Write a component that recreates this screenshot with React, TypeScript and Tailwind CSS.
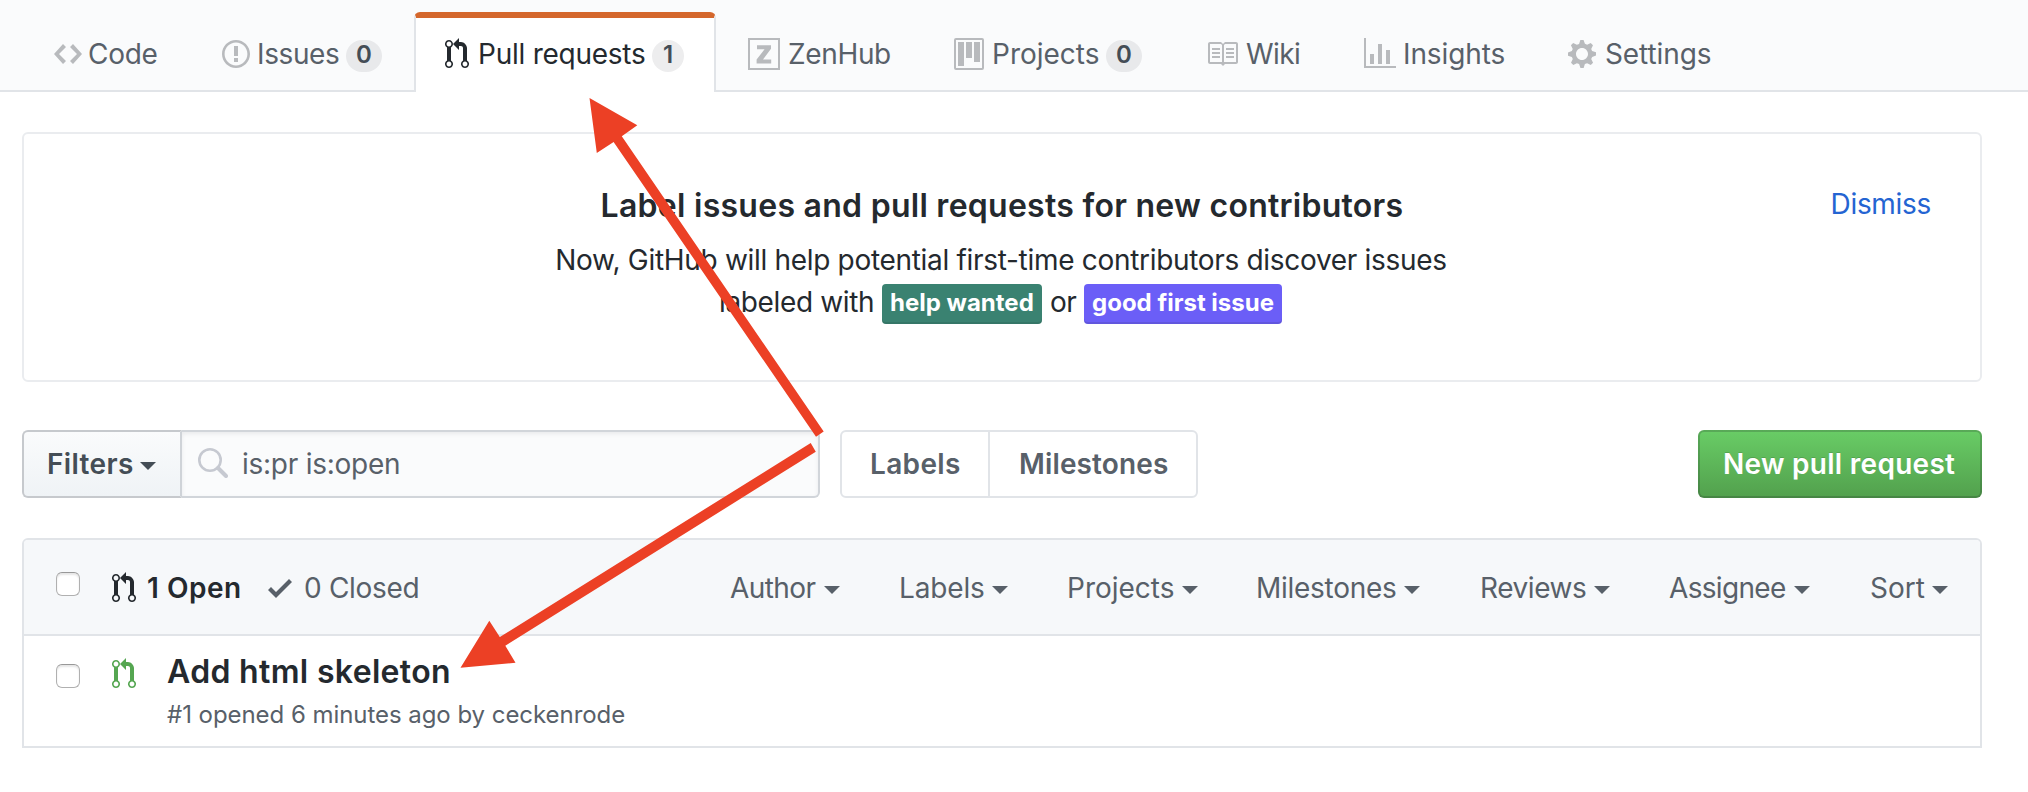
import type { ReactNode } from "react";
import clsx from "clsx";

const ICONS = {
  code: { w: 14, d: "M9.5 3L8 4.5 11.5 8 8 11.5 9.5 13 14 8 9.5 3zm-5 0L0 8l4.5 5L6 11.5 2.5 8 6 4.5 4.5 3z" },
  issue: { w: 14, d: "M7 2.3c3.14 0 5.7 2.56 5.7 5.7s-2.56 5.7-5.7 5.7A5.71 5.71 0 0 1 1.3 8c0-3.14 2.56-5.7 5.7-5.7zM7 1C3.14 1 0 4.14 0 8s3.14 7 7 7 7-3.14 7-7-3.14-7-7-7zm1 3H6v5h2V4zm0 6H6v2h2v-2z" },
  pull: { w: 12, d: "M11 11.28V5c-.03-.78-.34-1.47-.94-2.06C9.46 2.35 8.78 2.03 8 2H7V0L4 3l3 3V4h1c.27.02.48.11.69.31.21.2.3.42.31.69v6.28A1.993 1.993 0 0 0 10 15a1.993 1.993 0 0 0 1-3.72zm-1 2.92c-.66 0-1.2-.55-1.2-1.2 0-.65.55-1.2 1.2-1.2.65 0 1.2.55 1.2 1.2 0 .65-.55 1.2-1.2 1.2zM4 3c0-1.11-.89-2-2-2a1.993 1.993 0 0 0-1 3.72v6.56A1.993 1.993 0 0 0 2 15a1.993 1.993 0 0 0 1-3.72V4.72c.59-.34 1-.98 1-1.72zm-.8 10c0 .66-.55 1.2-1.2 1.2-.65 0-1.2-.55-1.2-1.2 0-.65.55-1.2 1.2-1.2.65 0 1.2.55 1.2 1.2zM2 4.2C1.34 4.2.8 3.65.8 3c0-.65.55-1.2 1.2-1.2.65 0 1.2.55 1.2 1.2 0 .65-.55 1.2-1.2 1.2z" },
  zenhub: { w: 16, d: "M0 0h16v16H0V0zm1 1v14h14V1H1zM4.5 3.6h7v1.8L7.5 10.7h4.1v2H4.3v-1.9l4-5.2H4.5v-2z" },
  project: { w: 15, d: "M10 12h3V2h-3v10zm-4-2h3V2H6v8zm-4 4h3V2H2v12zm-1 1h13V1H1v14zM14 0H1a1 1 0 0 0-1 1v14a1 1 0 0 0 1 1h13a1 1 0 0 0 1-1V1a1 1 0 0 0-1-1z" },
  book: { w: 16, d: "M3 5h4v1H3V5zm0 3h4V7H3v1zm0 2h4V9H3v1zm11-5h-4v1h4V5zm0 2h-4v1h4V7zm0 2h-4v1h4V9zm2-6v9c0 .55-.45 1-1 1H9.5l-1 1-1-1H2c-.55 0-1-.45-1-1V3c0-.55.45-1 1-1h5.5l1 1 1-1H15c.55 0 1 .45 1 1zm-8 .5L7.5 3H2v9h6V3.5zm7-.5H9.5l-.5.5V12h6V3z" },
  graph: { w: 16, d: "M16 14v1H0V0h1v14h15zM5 13H3V8h2v5zm4 0H7V3h2v10zm4 0h-2V6h2v7z" },
  gear: { w: 14, d: "M14 8.77v-1.6l-1.94-.64-.45-1.09.88-1.84-1.13-1.13-1.81.91-1.09-.45-.69-1.92h-1.6l-.63 1.94-1.11.45-1.84-.88-1.13 1.13.91 1.81-.45 1.09L0 7.23v1.59l1.94.64.45 1.09-.88 1.84 1.13 1.13 1.81-.91 1.09.45.69 1.92h1.59l.63-1.94 1.11-.45 1.84.88 1.13-1.13-.92-1.81.47-1.09L14 8.75v.02zM7 11c-1.66 0-3-1.34-3-3s1.34-3 3-3 3 1.34 3 3-1.34 3-3 3z" },
  check: { w: 12, d: "M12 5l-8 8-4-4 1.5-1.5L4 10l6.5-6.5L12 5z" },
};

function Icon({ name, className }: { name: keyof typeof ICONS; className?: string }) {
  const { w, d } = ICONS[name];
  return (
    <svg width={w * 2} height={32} viewBox={`0 0 ${w} 16`} className={clsx("shrink-0", className)} fill="currentColor" fillRule="evenodd" aria-hidden="true">
      <path d={d} />
    </svg>
  );
}

function Caret() {
  return <span className="mt-1 size-0 shrink-0 border-x-8 border-t-8 border-x-transparent border-t-current" />;
}

function Counter({ className, children }: { className: string; children: ReactNode }) {
  return (
    <span className={clsx("mt-1 h-8 shrink-0 rounded-full bg-[#1b1f23]/8 text-center text-2xl leading-[30px] font-semibold text-[#444d56]", className)}>
      {children}
    </span>
  );
}

function Checkbox({ className }: { className?: string }) {
  return <span role="checkbox" aria-checked="false" className={clsx("size-6 shrink-0 rounded-md border border-[#b0b0b0] border-t-[#989898] bg-white shadow-[inset_0_2px_2px_rgba(0,0,0,0.1)]", className)} />;
}

interface Tab {
  icon: keyof typeof ICONS;
  label: string;
  text: string;
  active?: boolean;
  count?: string;
  counter?: string;
}

const TABS: Tab[] = [
  { icon: "code", label: "Code", text: "ml-1.5 w-[134px] tracking-[-0.3px]" },
  { icon: "issue", label: "Issues", text: "ml-[7px] w-[89px] tracking-[-0.39px]", count: "0", counter: "w-9 mr-8" },
  { icon: "pull", label: "Pull requests", active: true, text: "ml-[9px] w-[174px] tracking-[-0.25px]", count: "1", counter: "w-8" },
  { icon: "zenhub", label: "ZenHub", text: "ml-2 w-[166px] tracking-[-0.35px]" },
  { icon: "project", label: "Projects", text: "ml-2 w-[114px]", count: "0", counter: "w-9 mr-16" },
  { icon: "book", label: "Wiki", text: "ml-2 w-[118px] tracking-[-0.6px]" },
  { icon: "graph", label: "Insights", text: "ml-[7px] w-[165px] tracking-[-0.1px]" },
  { icon: "gear", label: "Settings", text: "ml-[9px] w-[108px] tracking-[-0.1px]" },
];

const FILTERS = [
  { label: "Author", cls: "w-[110px] tracking-[-0.6px]" },
  { label: "Labels", cls: "ml-[59px] w-[109px] tracking-[-0.16px]" },
  { label: "Projects", cls: "ml-[59px] w-[131px]" },
  { label: "Milestones", cls: "ml-[58px] w-[164px] tracking-[-0.28px]" },
  { label: "Reviews", cls: "ml-[60px] w-[130px] tracking-[-0.44px]" },
  { label: "Assignee", cls: "ml-[59px] w-[141px] tracking-[-0.67px]" },
  { label: "Sort", cls: "ml-[60px] w-[78px]" },
];

function Nav() {
  return (
    <nav className="flex h-[92px] items-end border-b-2 border-[#e1e4e8] bg-[#fafbfc] pl-[54px]">
      {TABS.map((t) => (
        <a
          key={t.label}
          className={clsx(
            "flex shrink-0 items-center",
            t.active
              ? "mr-8 -mb-0.5 h-20 w-[302px] rounded-t-md border-x-2 border-t-[6px] border-x-[#e1e4e8] border-t-[#d4672c] bg-white pb-0.5 pl-[29px] text-[#24292e]"
              : "h-[72px] text-[#586069]",
          )}
        >
          <Icon name={t.icon} className={t.active ? "" : "text-[#b8babd]"} />
          <span className={clsx("shrink-0", t.text)}>{t.label}</span>
          {t.count && <Counter className={t.counter ?? ""}>{t.count}</Counter>}
        </a>
      ))}
    </nav>
  );
}

function Notice() {
  return (
    <section className="mt-10 grid h-[250px] grid-cols-[1fr_auto_1fr] rounded-md border-2 border-[#eaecef] px-[49px] pt-12">
      <div />
      <div className="text-center">
        <h2 className="text-[32px] leading-[48px] font-semibold tracking-[0.27px]">Label issues and pull requests for new contributors</h2>
        <p className="mt-[9px] pr-0.5 leading-[42px] tracking-[-0.31px]">Now, GitHub will help potential first-time contributors discover issues</p>
        <p className="flex h-[42px] justify-center pr-[3px] text-left leading-[42px]">
          <span className="w-[163px] tracking-[-0.36px]">labeled with</span>
          <span className="mt-[3px] h-10 w-40 rounded bg-[#3a8271] pl-2 text-2xl leading-[38px] font-bold text-white shadow-[inset_0_-2px_0_rgba(27,31,35,0.12)]">help wanted</span>
          <span className="ml-2 w-[34px] tracking-[-0.5px]">or</span>
          <span className="mt-[3px] h-10 w-[198px] rounded bg-[#6b5ef7] pl-2 text-2xl leading-[38px] font-bold text-white shadow-[inset_0_-2px_0_rgba(27,31,35,0.12)]">good first issue</span>
        </p>
      </div>
      <a className="mt-px justify-self-end leading-[42px] tracking-[-0.31px] text-[#2464d2]">Dismiss</a>
    </section>
  );
}

function Toolbar() {
  return (
    <div className="mt-12 flex h-[68px] items-stretch">
      <button className="flex w-40 items-center gap-[7px] rounded-l-md border-2 border-[#c6c9cd] border-r-[#cfd3d8] bg-linear-to-b from-[#fafbfc] to-[#eff3f6] pl-[23px] text-left font-semibold tracking-[0.36px] text-[#444d56]">
        <span className="w-[86px]">Filters</span>
        <Caret />
      </button>
      <div className="flex w-[638px] items-center rounded-r-md border-y-2 border-r-2 border-[#d1d5da] bg-[#fafbfc] pl-4 tracking-[-0.26px] text-[#586069] shadow-[inset_0_2px_4px_rgba(27,31,35,0.075)]">
        <svg width="30" height="30" viewBox="0 0 30 30" className="mb-0.5 text-[#c6c9d1]" fill="none" stroke="currentColor" aria-hidden="true">
          <circle cx="12" cy="12" r="10.7" strokeWidth="2.6" />
          <path d="M20 20l8 8" strokeWidth="4" strokeLinecap="round" />
        </svg>
        <span className="ml-3.5">is:pr is:open</span>
      </div>
      <div className="ml-5 flex w-[358px] rounded-md border-2 border-[#e1e4e8] font-semibold text-[#586069]">
        <a className="flex w-[148px] items-center border-r-2 border-[#e1e4e8] pl-7 tracking-[0.35px]">Labels</a>
        <a className="flex items-center pl-[29px] tracking-[0.14px]">Milestones</a>
      </div>
      <button className="ml-auto w-[284px] rounded-md border-2 border-[#1b1f23]/20 bg-linear-to-b from-[#69cd66] to-[#52a04d] bg-origin-border pl-[23px] text-left font-semibold tracking-[0.28px] text-white [text-shadow:0_-1px_0_rgba(0,0,0,0.15)]">
        New pull request
      </button>
    </div>
  );
}

function PullList() {
  return (
    <section className="mt-10 h-[210px] rounded-t-md border-2 border-[#e1e4e8]">
      <header className="flex h-24 items-center rounded-t border-b-2 border-[#e1e4e8] bg-[#f6f8fa] pt-0.5 pl-8 text-[#586069]">
        <Checkbox className="mb-2" />
        <Icon name="pull" className="ml-8 text-[#24292e]" />
        <span className="ml-[11px] w-[121px] font-semibold tracking-[0.5px] text-[#24292e]">1 Open</span>
        <Icon name="check" />
        <span className="ml-3 w-[426px] tracking-[-0.3px]">0 Closed</span>
        {FILTERS.map((f) => (
          <span key={f.label} className={clsx("flex shrink-0 items-center justify-between", f.cls)}>
            {f.label}
            <Caret />
          </span>
        ))}
      </header>
      <article className="flex items-start pl-8">
        <Checkbox className="mt-7" />
        <Icon name="pull" className="mt-[22px] ml-8 text-[#55a651]" />
        <div className="mt-3 ml-[31px]">
          <h3 className="text-[32px] leading-[48px] font-semibold tracking-[0.33px]">Add html skeleton</h3>
          <p className="mt-px text-2xl leading-9 tracking-[-0.05px] text-[#586069]">#1 opened 6 minutes ago by ceckenrode</p>
        </div>
      </article>
    </section>
  );
}

function Arrows() {
  return (
    <svg className="pointer-events-none absolute top-0 left-0" width="2028" height="792" viewBox="0 0 2028 792" fill="#ec4025" aria-hidden="true">
      <path d="M589.5 98L637.3 125.3 621.8 136.3 823.7 431.5 816 436.7 613.6 142 596.8 153z" />
      <path d="M460.5 667.8L489.3 620.7 499.8 637 810.7 443 815.8 451.7 505.3 645.8 515.5 662.7z" />
    </svg>
  );
}

export default function App() {
  return (
    <div className="relative h-[792px] w-[2028px] overflow-hidden bg-white font-['Inter',sans-serif] text-[28px] leading-[42px] whitespace-nowrap text-[#24292e]">
      <Nav />
      <main className="mr-[46px] ml-[22px]">
        <Notice />
        <Toolbar />
        <PullList />
      </main>
      <Arrows />
    </div>
  );
}
